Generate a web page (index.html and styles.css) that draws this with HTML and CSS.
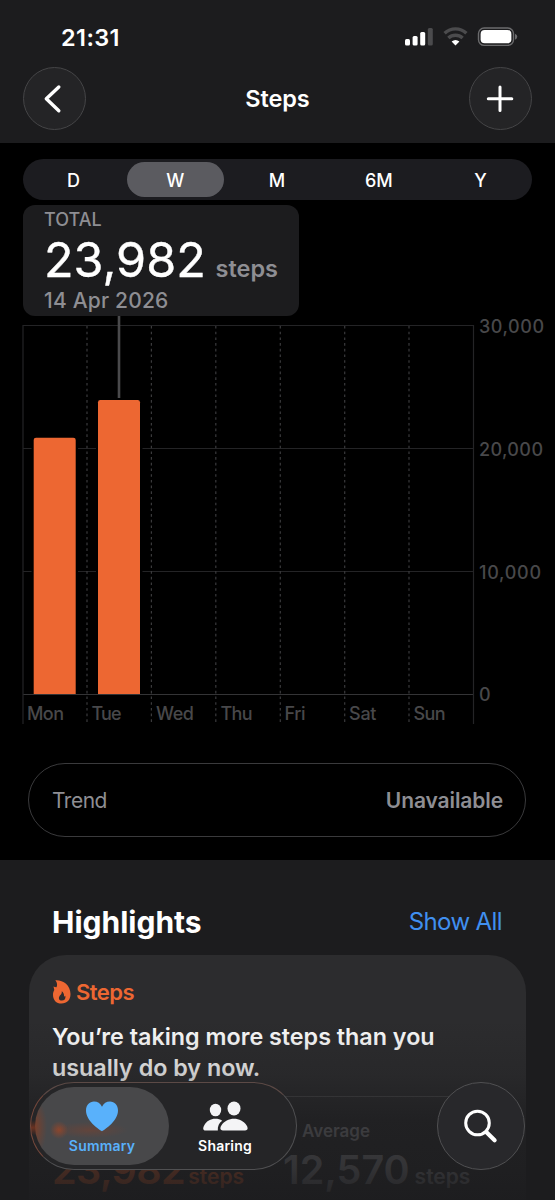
FILE: index.html
```
<!DOCTYPE html>
<html lang="en">
<head>
    <meta charset="UTF-8">
    <meta name="viewport" content="width=device-width, initial-scale=1.0">
    <title>Steps</title>
    <link rel="stylesheet" href="styles.css">
</head>
<body>
    <div class="screen">
        <header class="header">
            <div class="status">
                <span class="time">21:31</span>
                <svg class="status-icons" width="114" height="20" viewBox="0 0 114 20">
                    <rect x="1" y="12" width="5" height="6.5" rx="1.5" fill="#fff"/>
                    <rect x="8.6" y="9" width="5" height="9.5" rx="1.5" fill="#fff"/>
                    <rect x="16.2" y="5" width="5" height="13.5" rx="1.5" fill="#fff"/>
                    <rect x="23.8" y="1" width="5" height="17.5" rx="1.5" fill="#4b4b4d"/>
                    <path d="M40.6 6.2a16 16 0 0 1 21.8 0" fill="none" stroke="#4b4b4d" stroke-width="3.4"/>
                    <path d="M44.4 11a10.4 10.4 0 0 1 14.2 0" fill="none" stroke="#4b4b4d" stroke-width="3.4"/>
                    <path d="M47.6 14.6a5.9 5.9 0 0 1 7.8 0L51.5 18.6Z" fill="#fff"/>
                    <rect x="74.5" y="1" width="35" height="17.4" rx="5.6" fill="none" stroke="#6b6b6d" stroke-width="1.4"/>
                    <rect x="76.6" y="3.1" width="30.8" height="13.2" rx="4" fill="#fff"/>
                    <path d="M111 6.8q2.3 1 2.3 3t-2.3 3Z" fill="#6b6b6d"/>
                </svg>
            </div>
            <div class="nav">
                <button class="round-btn" aria-label="Back">
                    <svg width="61" height="61" viewBox="0 0 61 61"><path d="M34.8 19 22.3 30.8l12.5 12" /></svg>
                </button>
                <h1>Steps</h1>
                <button class="round-btn" aria-label="Add">
                    <svg width="61" height="61" viewBox="0 0 61 61"><path class="thin" d="M30 19v23.5M18.3 30.8h23.5" /></svg>
                </button>
            </div>
        </header>

        <main class="main">
            <div class="tabs">
                <span>D</span>
                <span class="active">W</span>
                <span>M</span>
                <span>6M</span>
                <span>Y</span>
            </div>

            <div class="total">
                <div class="total-label">TOTAL</div>
                <div class="total-value"><b>23,982</b><span>steps</span></div>
                <div class="total-date">14 Apr 2026</div>
            </div>

            <svg class="chart" width="555" height="412" viewBox="0 316 555 412">
                <g class="grid">
                    <path d="M23 325.5H473.5M23 448.5H473.5M23 571.5H473.5"/>
                    <path class="axis" d="M23 694.5H473.5"/>
                    <path d="M23 325V724M473.5 325V724"/>
                    <path class="dash" d="M87 326V724M151.4 326V724M215.8 326V724M280.3 326V724M344.7 326V724M409 326V724"/>
                </g>
                <path d="M119 316V398" stroke="#4a4a4c" stroke-width="2.6"/>
                <!-- black gap around the bars -->
                <path d="M31.5 440h46.5v253.5H31.5ZM96 402h46.5v291.5H96Z" fill="#000"/>
                <path d="M33.7 694V440q0-2.3 2.3-2.3H73.4q2.3 0 2.3 2.3V694Z" fill="#ed6732"/>
                <path d="M98 694V402.3q0-2.3 2.3-2.3H137.7q2.3 0 2.3 2.3V694Z" fill="#ed6732"/>
                <g class="labels">
                    <text x="479" y="332.5" textLength="65">30,000</text>
                    <text x="479" y="455.5" textLength="64">20,000</text>
                    <text x="479" y="578.5" textLength="62">10,000</text>
                    <text x="479" y="701">0</text>
                    <text x="27" y="719.5" textLength="37">Mon</text>
                    <text x="91.5" y="719.5" textLength="30">Tue</text>
                    <text x="156" y="719.5" textLength="38">Wed</text>
                    <text x="220.5" y="719.5" textLength="32">Thu</text>
                    <text x="284.5" y="719.5" textLength="21">Fri</text>
                    <text x="349" y="719.5" textLength="27.5">Sat</text>
                    <text x="413.5" y="719.5" textLength="32">Sun</text>
                </g>
            </svg>

            <div class="trend">
                <span>Trend</span>
                <b>Unavailable</b>
            </div>
        </main>

        <section class="highlights">
            <div class="section-title">
                <h2>Highlights</h2>
                <a>Show All</a>
            </div>
            <div class="card">
                <div class="card-title">
                    <svg width="20" height="24" viewBox="0 0 20 24">
                        <path fill="#ed6732" fill-rule="evenodd" d="M3.3.3C10.5-.3 18.5 4.8 18.5 14c0 6-3.6 9.5-9 9.500S1 20 1 14.7c0-1.9.5-3.3 1.3-4.700L1.5 6.5c1.2.5 2 .8 3 .7C5.6 4.7 5 2.2 3.3.3ZM9.7 11.3c.3 1.8-.3 2.5-1.3 3.700-2.7 2.900-1.500 5.600 1.500 5.600 2.800 0 4.100-2.200 3.300-4.800-.3.5-.7.8-1.200.9.3-2.300-.5-4.300-2.300-5.400Z"/>
                    </svg>
                    <span>Steps</span>
                </div>
                <p>You’re taking more steps than you<br>usually do by now.</p>
                <div class="compare">
                    <div class="today">
                        <div class="compare-value"><b>23,982</b><span>steps</span></div>
                    </div>
                    <div class="average">
                        <div class="compare-label">Average</div>
                        <div class="compare-value"><b>12,570</b><span>steps</span></div>
                    </div>
                </div>
            </div>
        </section>

        <div class="fade"></div>

        <nav class="tabbar">
            <div class="menu">
                <div class="item selected">
                    <svg width="36" height="32" viewBox="0 0 36 32"><path fill="#59b1fb" d="M18 31.3C14.5 29 2 21 2 10.5 2 5.2 5.5 1.5 10 1.5c3.6 0 6.4 1.9 8 5.2 1.6-3.3 4.4-5.2 8-5.2 4.5 0 8 3.7 8 9C34 21 21.5 29 18 31.3Z"/></svg>
                    <span>Summary</span>
                </div>
                <div class="item">
                    <svg width="46" height="32" viewBox="0 0 46 32" fill="#f4f4f6">
                        <ellipse cx="13.5" cy="10" rx="5.7" ry="6.3"/>
                        <path d="M3.5 30.5C.8 30.5.7 28 2.3 25.2 4.5 21 8.7 18.8 13.3 18.8c2.6 0 5 .6 6.9 2-3.1 2.2-4.7 5.4-4.4 9.7Z"/>
                        <ellipse cx="32" cy="8.5" rx="6.5" ry="7"/>
                        <path d="M21 30.5c-3 0-3.3-2.6-1.5-5.3 2.6-4 7.4-6.5 12.5-6.5s9.9 2.5 12.5 6.5c1.8 2.7 1.5 5.3-1.5 5.3Z"/>
                    </svg>
                    <span>Sharing</span>
                </div>
            </div>
            <div class="search">
                <svg width="88" height="88" viewBox="0 0 88 88" fill="none" stroke="#fff" stroke-linecap="round">
                    <circle cx="40.5" cy="41" r="11.8" stroke-width="3"/>
                    <path d="M49.5 50.3 57.6 58.3" stroke-width="4.2"/>
                </svg>
            </div>
        </nav>
    </div>
</body>
</html>
```
FILE: styles.css
```
* {
    box-sizing: border-box;
}
body {
    margin: 0;
    background: #000;
    color: #fff;
    font-family: Inter, "Liberation Sans", sans-serif;
}
h1, h2, p {
    margin: 0;
}
.screen {
    position: relative;
    width: 555px;
    height: 1200px;
    overflow: hidden;
}

/* header */
.header {
    height: 143px;
    background: #1c1c1e;
}
.status {
    display: flex;
    justify-content: space-between;
    align-items: center;
    height: 67px;
    padding: 7px 37px 0 61px;
}
.time {
    font-size: 23.5px;
    font-weight: 600;
    letter-spacing: 0.4px;
}
.nav {
    display: flex;
    justify-content: space-between;
    align-items: center;
    padding: 0 23px;
}
.nav h1 {
    font-size: 23.5px;
    font-weight: 600;
    letter-spacing: -0.1px;
}
.round-btn {
    width: 63px;
    height: 63px;
    padding: 0;
    border: 1px solid #454547;
    border-radius: 50%;
    background: #242426;
}
.round-btn svg {
    display: block;
    fill: none;
    stroke: #fff;
    stroke-width: 3.4;
    stroke-linecap: round;
    stroke-linejoin: round;
}
.round-btn .thin {
    stroke-width: 3;
}

/* chart */
.main {
    height: 717px;
    padding-top: 16px;
}
.tabs {
    display: grid;
    grid-template-columns: repeat(5, 1fr);
    gap: 5px;
    width: 509px;
    height: 41px;
    margin-left: 23px;
    padding: 3px 3px 3px 2px;
    border-radius: 21px;
    background: #1c1c20;
}
.tabs span {
    display: flex;
    justify-content: center;
    align-items: center;
    padding-top: 1px;
    border-radius: 18px;
    font-size: 18px;
    font-weight: 500;
}
.tabs .active {
    background: #5b5b60;
}
.total {
    width: 276px;
    height: 111px;
    margin: 5px 0 0 23px;
    padding: 4px 21px 0;
    border-radius: 12px;
    background: #1c1c1e;
    color: #8e8e93;
    font-weight: 500;
}
.total-label {
    font-size: 18px;
    line-height: 21px;
}
.total-value {
    display: flex;
    align-items: baseline;
    height: 60px;
    line-height: 59px;
}
.total-value b {
    width: 172px;
    color: #fff;
    font-size: 48.5px;
    font-weight: 400;
    -webkit-text-stroke: 0.4px #fff;
}
.total-value span {
    font-size: 23.5px;
    font-weight: 600;
}
.total-date {
    font-size: 21px;
    line-height: 22px;
    letter-spacing: 0.2px;
}
.chart {
    display: block;
}
.grid {
    fill: none;
    stroke: #242426;
    stroke-width: 1.2;
}
.grid .axis {
    stroke: #343436;
}
.grid .dash {
    stroke: #3a3a3c;
    stroke-dasharray: 2.6 3.1;
}
.labels {
    fill: #48484a;
    font-size: 18px;
    font-weight: 500;
}
.trend {
    display: flex;
    justify-content: space-between;
    align-items: center;
    width: 498px;
    height: 74px;
    margin: 35px 0 0 28px;
    padding: 0 22px 0 23px;
    border: 1.5px solid #3a3a3c;
    border-radius: 37px;
    color: #8e8e93;
    font-size: 21px;
}
.trend span {
    letter-spacing: -0.5px;
}
.trend b {
    font-weight: 600;
    letter-spacing: -0.1px;
}

/* highlights */
.highlights {
    height: 340px;
    padding: 0 29px;
    background: #1c1c1e;
}
.section-title {
    display: flex;
    justify-content: space-between;
    align-items: center;
    height: 95px;
    padding: 28px 24px 0 23px;
}
.section-title h2 {
    font-size: 30px;
    font-weight: 700;
}
.section-title a {
    color: #408ff0;
    font-size: 24px;
    letter-spacing: -0.6px;
}
.card {
    height: 300px;
    padding: 24px 23px 0;
    border-radius: 37px;
    background: #2c2c2e;
}
.card-title {
    display: flex;
    align-items: center;
    gap: 4px;
    height: 26px;
    color: #ed6732;
    font-size: 22px;
    font-weight: 600;
    letter-spacing: -0.5px;
}
.card p {
    margin-top: 16px;
    font-size: 23.3px;
    font-weight: 600;
    line-height: 31px;
    white-space: nowrap;
}
.compare {
    display: grid;
    grid-template-columns: 231px 1fr;
    align-items: end;
    margin-top: 13px;
    padding-top: 21px;
    border-top: 1px solid #48484a;
    font-weight: 600;
    color: #8e8e93;
}
.compare-label {
    padding-left: 19px;
    font-size: 17px;
    line-height: 26px;
}
.compare-value {
    display: flex;
    align-items: baseline;
    gap: 5px;
    margin-top: 10px;
    line-height: 32px;
}
.compare-value b {
    font-size: 39.5px;
    font-weight: 600;
}
.compare-value span {
    font-size: 21px;
}
.today {
    color: #ed6732;
}
.today .compare-value {
    gap: 3px;
}
.today b {
    letter-spacing: -0.5px;
}

/* bottom bar, floats over the page */
.fade {
    position: absolute;
    left: 0;
    right: 0;
    bottom: 0;
    height: 180px;
    background: linear-gradient(rgba(28, 28, 30, 0), rgba(28, 28, 30, 0.23) 30%, rgba(28, 28, 30, 0.7) 56%, rgba(28, 28, 30, 0.8) 82%, rgba(28, 28, 30, 0.93));
}
.tabbar {
    position: absolute;
    left: 30px;
    right: 30px;
    bottom: 30px;
    display: flex;
    justify-content: space-between;
}
.menu {
    display: flex;
    width: 267px;
    height: 88px;
    padding: 4px;
    border: 1.3px solid #505052;
    border-color: #5c4a46 #505052 #505052 #75483c;
    border-radius: 44px;
    background: radial-gradient(ellipse at 0 52%, #6b3221, rgba(107, 50, 33, 0) 12%), #252527;
}
.item {
    display: flex;
    flex-direction: column;
    align-items: center;
    width: 112px;
    padding-top: 13px;
    font-size: 14px;
    font-weight: 600;
}
.item span {
    margin-top: 5px;
    line-height: 18px;
    letter-spacing: 0.2px;
}
.selected {
    width: 134px;
    border-radius: 39px;
    background: radial-gradient(circle at 24px 43px, rgba(160, 69, 36, 0.75), rgba(160, 69, 36, 0) 9px), radial-gradient(ellipse 38px 8px at 55px 43px, rgba(125, 65, 45, 0.5), rgba(125, 65, 45, 0)), radial-gradient(ellipse 12px 28px at 0 40px, rgba(140, 60, 30, 0.7), rgba(140, 60, 30, 0)), #48484a;
    color: #59b1fb;
}
.search {
    width: 88px;
    height: 88px;
    border: 1.3px solid #505052;
    border-radius: 50%;
    background: #28282b;
}
.search svg {
    display: block;
    margin: -1px;
}
```
